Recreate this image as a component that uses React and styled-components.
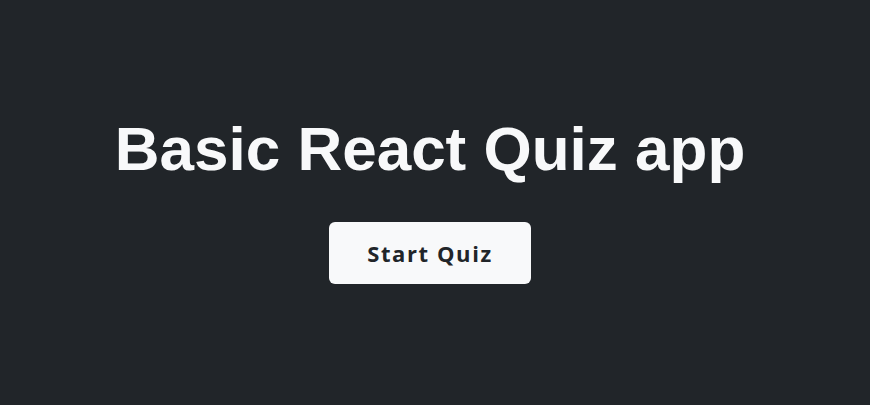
import React from 'react';
import styled, { createGlobalStyle } from 'styled-components';

const GlobalStyle = createGlobalStyle`
  body {
    margin: 0;
    background-color: #212529;
  }
`;

const StyledPage = styled.div`
  display: flex;
  flex-direction: column;
  align-items: center;
  justify-content: center;
  height: 100vh;
  padding: 0 10px 9px 0;
  box-sizing: border-box;
`;

const StyledTitle = styled.h1`
  font-family: 'Liberation Sans', Arial, sans-serif;
  font-weight: 700;
  font-size: 62px;
  line-height: 1.2;
  color: #f8f9fa;
  margin: 0 0 36px;
`;

const StyledButton = styled.button`
  display: flex;
  align-items: center;
  justify-content: center;
  width: 202px;
  height: 62px;
  border: none;
  border-radius: 6px;
  background-color: #f8f9fa;
  color: #212529;
  font-family: 'Open Sans', 'Noto Sans', sans-serif;
  font-weight: 700;
  font-size: 22px;
  letter-spacing: 1.6px;
  cursor: pointer;
`;

const App = () => {
  return (
    <>
      <GlobalStyle />
      <StyledPage>
        <StyledTitle>Basic React Quiz app</StyledTitle>
        <StyledButton>Start Quiz</StyledButton>
      </StyledPage>
    </>
  );
};

export default App;
